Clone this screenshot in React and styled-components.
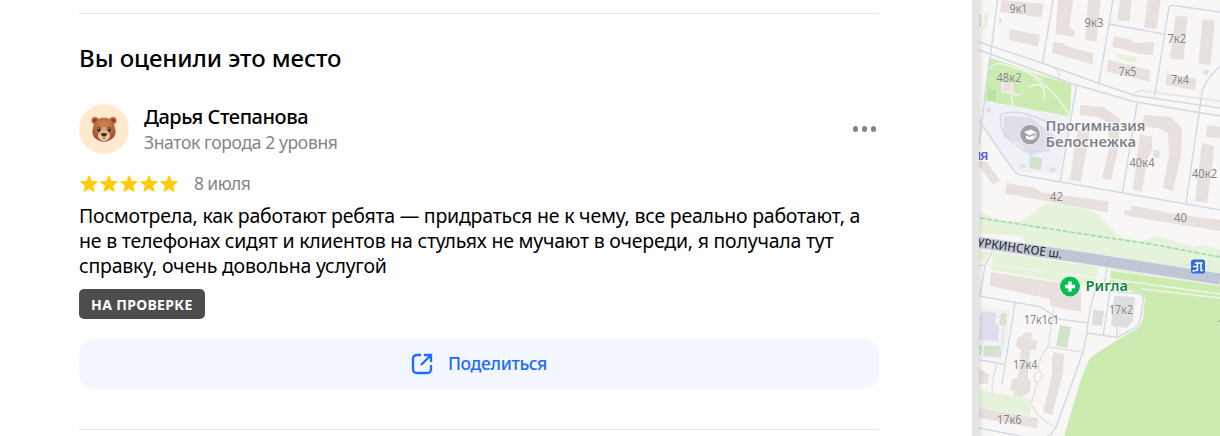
import React from "react";
import styled, { createGlobalStyle } from "styled-components";

const GlobalStyle = createGlobalStyle`
  * {
    box-sizing: border-box;
  }
  body {
    margin: 0;
    background: #fff;
    font-family: "Noto Sans", "Open Sans", sans-serif;
    color: #000;
  }
`;

const stars = [1, 2, 3, 4, 5];

const reviewLines = [
  "Посмотрела, как работают ребята — придраться не к чему, все реально работают, а",
  "не в телефонах сидят и клиентов на стульях не мучают в очереди, я получала тут",
  "справку, очень довольна услугой",
];

const buildings = [
  "1001.5,0 1043.5,4 1041.5,17.5 1000,12",
  "1010,29 1040,35 1037.5,46.5 1009,40",
  "1058,0 1073,0 1069.5,28 1075,31 1074,37 1055.5,34",
  "1088,0 1100.5,0 1096.5,41.5 1085,40",
  "1053.5,41.5 1065,44 1066,46 1093.5,53.5 1092.5,64.5 1052,52.5",
  "1120,0 1131.5,0 1129.5,21.5 1117.5,20",
  "1147.5,0 1160.5,0 1156.5,29 1144,27.5",
  "1114,36 1132,40 1132,43 1154,42 1153,55 1140,54 1123,49 1112,47",
  "1108.5,60 1150,70 1149,81.5 1106.5,71.5",
  "1175.5,16 1187.5,16.5 1183.5,60 1170,58.5",
  "1202.5,19.5 1215,20.5 1210.5,65 1198.5,63.5",
  "1166.5,73.5 1196,78.5 1195,90 1166,85",
  "1207,125 1220,127 1220,138 1206,137",
  "1080,105 1103,107 1120,119 1118,150 1111,180 1102,178 1109,150 1108,123 1098,117 1080,115",
  "1078,130 1090,130 1081,182 1070,180 1074,150",
  "1144,115 1171,117 1182,129 1181,155 1173,191 1163,188 1169,155 1168,133 1158,128 1142,127",
  "1140,134 1152,137 1152,150 1147,160 1142,192 1133,190",
  "1202,143 1214,146 1213,160 1207,203 1195,201",
  "979,160 987,162 1000,180.5 993,184.5 979,166",
  "1006.5,183 1035,188 1040,192 1108.5,201.5 1107.5,212.5 1005,193.5",
  "1131.5,205.5 1175,214 1220,220 1220,231 1130,216.5",
  "991,272 1060,283 1081,290 1081,312 1050,306 1050,299 990,286",
  "1020,337 1026,332 1032,333 1031,340 1037,340 1036,349 1030,350 1028,378 1031,381 1030,392 1022,397 1014,396 1014,391 1010,390 1012,380 1018,377 1021,350 1016,347 1017,338",
  "1054,352 1064,354 1063,373 1052,415 1043,412 1052,375 1052,358",
  "979,408 1038,418 1037,428 979,418",
  "979,369 989,374 988,384 979,384",
  "979,15 982,15 981,27 979,27",
];

const roads = [
  "M979 42L1042 63L1098 83L1135 95.5L1220 108",
  "M979 50L1070 83L1133 101.5L1220 116",
  "M997.5 0L979 145",
  "M1053 0L1042.5 63",
  "M1113 0L1099 83",
  "M1154.500 97L1169 7Q1170 5 1173 5.500L1220 12",
  "M1108 24L1163.500 34",
  "M1076.500 86L1060 182",
  "M1137 103L1122.500 193",
  "M1220 66Q1203 83 1202 93L1186 203",
  "M979 121L1012 168Q1015 174 1021 175L1220 210",
  "M979 296L1041 307L1058 319L1088 323",
  "M1015 303L1002 384",
  "M1097 286Q1089 306 1087 333L1083 352L1058 422Q1053 436 1045 437",
  "M1087 333L1117 337.500L1135 328Q1142 322 1143 298L1142 294L1110 291L1103 336",
  "M1117 337V326",
  "M979 360L1004 364",
  "M979 428L1025 437",
  "M979 265L985 266M993 250L985 266L980 295",
  "M1107 267L1104 286",
];

const footpaths = [
  "M1133 98Q1134 90 1143 91L1220 101",
  "M1054 308L1048 347L1082 352",
  "M1048 347Q1037 360 1039 370Q1030 378 1037 383Q1046 377 1039 370M1037 383L1031 404Q1041 422 1054 426",
  "M997 364Q990 385 993 397",
  "M1053 67Q1060 71 1059 78",
  "M995 316Q1003 316 1004 326L1002 345L996 356",
];

const parkPaths = [
  "M987 70Q998 60 1005 65L1071 83",
  "M1035 79Q1055 90 1069 115",
  "M1028 87Q1047 79 1044 99",
  "M1011 96L1013 106",
  "M1020 69L1042 80",
];

const houseLabels = [
  ["9к1", 1009.5, 13, 18],
  ["9к3", 1084.5, 26.500, 19],
  ["7к2", 1167.500, 43, 18.500],
  ["7к5", 1118.500, 75.500, 18],
  ["7к4", 1171, 84, 18],
  ["48к2", 996.500, 82, 25],
  ["40к4", 1129.500, 167, 25],
  ["40к2", 1192, 178, 25],
  ["42", 1050, 201, 13],
  ["40", 1174, 222, 13],
  ["17к2", 1109, 314, 24],
  ["17к1с1", 1024, 324, 35],
  ["17к4", 1013, 369, 24.500],
  ["17к6", 997, 424, 24.500],
];

const BearFace = () => (
  <svg width="26" height="26" viewBox="0 0 26 26">
    <defs>
      <radialGradient id="fur" cx="50%" cy="30%" r="70%">
        <stop offset="0" stopColor="#cb8656" />
        <stop offset="0.6" stopColor="#b8683c" />
        <stop offset="1" stopColor="#9a4a28" />
      </radialGradient>
      <linearGradient id="muzzle" x1="0" y1="0" x2="0" y2="1">
        <stop offset="0" stopColor="#d99d6c" />
        <stop offset="1" stopColor="#f3d8b6" />
      </linearGradient>
    </defs>
    <circle cx="4" cy="4.500" r="3.500" fill="#b3643a" />
    <circle cx="22" cy="4.500" r="3.500" fill="#b3643a" />
    <circle cx="4.300" cy="5" r="1.900" fill="#7d3d25" />
    <circle cx="21.700" cy="5" r="1.900" fill="#7d3d25" />
    <path d="M13 1.500C19 1.500 23 5 24 12C26.500 19 21 25.500 13 25.500S-0.500 19 2 12C3 5 7 1.500 13 1.500Z" fill="url(#fur)" />
    <path d="M13 10.500C15 10.500 15.500 14.500 18 16.500C20.500 20 18 24.800 13 24.800S5.500 20 8 16.500C10.500 14.500 11 10.500 13 10.500Z" fill="url(#muzzle)" />
    <ellipse cx="7.800" cy="13.500" rx="1.600" ry="2.200" fill="#2f2724" />
    <ellipse cx="18.200" cy="13.500" rx="1.600" ry="2.200" fill="#2f2724" />
    <circle cx="7.600" cy="12.700" r="0.600" fill="#d9dde0" />
    <circle cx="18" cy="12.700" r="0.600" fill="#d9dde0" />
    <path d="M9.800 17.800Q13 16.400 16.200 17.800Q15.500 20.600 13 20.800Q10.500 20.600 9.800 17.800Z" fill="#3b2823" />
    <path d="M10.500 22Q13 21.300 15.500 22Q13 24.200 10.500 22Z" fill="#b6574a" />
  </svg>
);

const Star = () => (
  <svg width="20" height="20" viewBox="0 0 20 20">
    <path
      d="M10 1.800L12.200 7.200L18.300 7.700L13.700 11.700L15.100 17.500L10 14.400L4.900 17.500L6.300 11.700L1.700 7.700L7.800 7.200Z"
      fill="#fc0"
      stroke="#fc0"
      strokeWidth="0.8"
      strokeLinejoin="round"
    />
  </svg>
);

const ShareIcon = () => (
  <svg width="22" height="22" viewBox="0 0 22 22" fill="none" stroke="#196dff" strokeWidth="2.3">
    <path d="M10 2H6Q2 2 2 6V16Q2 20 6 20H16Q20 20 20 16V12" />
    <path d="M13 2H20V9M19.500 2.500L10 12" />
  </svg>
);

const CityMap = () => (
  <MapCanvas viewBox="979 0 241 436">
    <defs>
      <linearGradient id="edge">
        <stop offset="0" stopColor="#000" stopOpacity="0.08" />
        <stop offset="1" stopColor="#000" stopOpacity="0" />
      </linearGradient>
    </defs>
    <rect x="979" width="241" height="436" fill="#f8f7f6" />

    {/* school grounds */}
    <path d="M983 101L1070 117L1059 174L1016 172L979 121Z" fill="#f0f0f7" />
    <path d="M1004 116L1030 117L1056 137L1048 150L1030 156L1020 144L1003 136Z" fill="#dfdfec" />
    <path d="M1001 114Q1020 109 1040 119L1056 125M1001 114Q997 132 1015 144L1025 151H1048L1055 138" fill="none" stroke="#d9dbe4" strokeWidth="1.5" />
    <path d="M1030 156L1042 158L1041 170L1029 168Z" fill="#d1e4cb" />
    <path d="M979 307L1010 311L1006 346L1001 360L979 357Z" fill="#f0f0f7" />
    <path d="M980 315L984 311L996 313L995 323L999 326L998 341L979 340Z" fill="#dfdcec" />
    <path d="M1001 313L1007 314L1006 326L999 325ZM979 345L982 345L981 355L979 355ZM984 346L1001 346L1001 357L983 356Z" fill="#d1e4cb" />

    {/* greenery */}
    <path d="M989 57.500L1071.500 84.500L1070 116.500L983.500 100.500Z" fill="#cbebb0" />
    <path d="M1117 54L1136 57L1138 61L1130 63L1118 58ZM985 11L989 13L986 30L982 29Z" fill="#e5f3da" />
    <path d="M979 212L1003 221L1021 221L1047 203L1066 205L1095 212L1119 236L1140 242L1157 236L1193 247L1205 245L1220 250V274L1080 254L1027 244L1021 236L979 233Z" fill="#e5f3da" />
    <path d="M993 252L1098 267L1096 288L1060 282L991 270Z" fill="#e5f3da" />
    <path d="M979 250L990 252L985 262L979 260ZM979 390L1031 399L1030 416L979 408ZM1123 262L1220 275V286L1108 271Z" fill="#e5f3da" />
    <path d="M1111 271L1220 286V436H1064L1082 376L1090 358L1117 340L1137 329L1143 319L1145 299L1142 294L1109 284Z" fill="#cbebb0" />
    <path d="M1109 279L1220 294M994 265L1107 279M1142 289L1220 298" stroke="#eef6e7" strokeWidth="1.500" />
    <path d="M1060 325L1071 327L1067 348L1056 346Z" fill="#d1e4cb" />
    <path d="M1001 82L1013 83L1014 93L1022 94L1022 85L1023 95L1015 96L1001 92Z" fill="#f1ece5" />
    <path d="M1003 82L1011 82V92L1003 91Z" fill="#e7e0dc" />
    <path d="M988 89L996 90V101L987 100Z" fill="#bce1a4" />

    {buildings.map((points) => (
      <polygon key={points} points={points} fill="#e7e0dc" />
    ))}
    <path d="M1114 296L1135 297L1133 320L1127 328L1111 326ZM1093 310L1104 311L1102 326L1092 325Z" fill="#dedede" />
    <path d="M999 18L1002 20L1001 23L999 23ZM1204 70L1209 71L1207 75L1203 74ZM987 107L991 108L990 113L986 112ZM1154 150L1160 151L1159 158L1153 157ZM1020 164L1026 165L1025 168L1020 167ZM1050 167L1056 169L1055 173L1049 171ZM1125 210L1131 211V216L1124 214Z" fill="#dfdfe1" />

    <g fill="none" strokeLinejoin="round">
      {parkPaths.map((d) => (
        <path key={d} d={d} stroke="#edf4df" strokeWidth="1.7" />
      ))}
      {footpaths.map((d) => (
        <path key={d} d={d} stroke="#e6e3df" strokeWidth="1.5" />
      ))}
      {roads.map((d) => (
        <path key={d} d={d} stroke="#d4dae5" strokeWidth="1.5" />
      ))}
      <path d="M980 218L1070 232L1150 244L1220 257" stroke="#a0d9ae" strokeWidth="1.6" strokeDasharray="5 2" />
      <path d="M1176 267Q1190 263 1212 267" stroke="#e5e5eb" strokeWidth="2" />
      <path d="M979 242.500L1085 258L1220 279" stroke="#e9edf2" strokeWidth="13" />
      <path d="M979 242.500L1085 258L1220 279" stroke="#bfc7d6" strokeWidth="11" />
    </g>

    {houseLabels.map(([label, x, y, length]) => (
      <HouseLabel key={label} x={x} y={y} textLength={length} lengthAdjust="spacingAndGlyphs">
        {label}
      </HouseLabel>
    ))}

    <StreetLabel transform="translate(976.500 246.500) rotate(8)" textLength="86" lengthAdjust="spacingAndGlyphs">
      УРКИНСКОЕ ш.
    </StreetLabel>
    <PlaceLabel x="980" y="160" $color="#6266d8" $size={14} textLength="8.500" lengthAdjust="spacingAndGlyphs">
      я
    </PlaceLabel>
    <path d="M979.500 152V160" stroke="#6266d8" strokeWidth="1.500" />

    <circle cx="1030" cy="134.500" r="10.500" fill="#f4f4f5" />
    <circle cx="1030" cy="134.500" r="9.800" fill="#9fa3a8" />
    <path d="M1024 132L1031 129.500L1036.500 132.500L1029.500 135.500ZM1026 135.500L1029.500 137L1034.500 135V138.500Q1031 141 1026 138.500Z" fill="#fff" />
    <path d="M1036 132.500V138" stroke="#fff" />
    <PlaceLabel x="1045.500" y="131" $color="#7e8288" $size={14.5} textLength="100" lengthAdjust="spacingAndGlyphs">
      Прогимназия
    </PlaceLabel>
    <PlaceLabel x="1045.500" y="147" $color="#7e8288" $size={14.5} textLength="90.500" lengthAdjust="spacingAndGlyphs">
      Белоснежка
    </PlaceLabel>

    <circle cx="1070" cy="286.500" r="10.500" fill="#fff" />
    <circle cx="1070" cy="286.500" r="10" fill="#0abb56" />
    <path d="M1070 281.500V291.500M1065 286.500H1075" stroke="#fff" strokeWidth="3.400" />
    <PlaceLabel x="1085.500" y="290.500" $color="#12843f" $size={15} textLength="42.500" lengthAdjust="spacingAndGlyphs">
      Ригла
    </PlaceLabel>

    <rect x="1191" y="259.500" width="14" height="14" rx="2.500" fill="#306ee0" />
    <path d="M1195 263H1202.500M1197.500 263V270.500M1201 263V270.500H1203M1193 266.500H1197.500M1194.500 270.500H1197.500" stroke="#fff" strokeWidth="1.500" fill="none" />
    <circle cx="1193.500" cy="271" r="1" fill="#fff" />

    <rect x="979" width="5" height="436" fill="url(#edge)" />
    <path d="M1218 322L1220 320" stroke="#8aa17c" />
  </MapCanvas>
);

const App = () => {
  return (
    <>
      <GlobalStyle />
      <Page>
        <Content>
          <Section>
            <Title>Вы оценили это место</Title>
            <Author>
              <Avatar>
                <BearFace />
              </Avatar>
              <AuthorInfo>
                <AuthorName>Дарья Степанова</AuthorName>
                <AuthorLevel>Знаток города 2 уровня</AuthorLevel>
              </AuthorInfo>
              <MenuButton aria-label="Ещё">
                <Dot />
                <Dot />
                <Dot />
              </MenuButton>
            </Author>
            <Rating>
              <Stars>
                {stars.map((star) => (
                  <Star key={star} />
                ))}
              </Stars>
              <ReviewDate>8 июля</ReviewDate>
            </Rating>
            <ReviewText>
              {reviewLines.map((line) => (
                <ReviewLine key={line}>{line}</ReviewLine>
              ))}
            </ReviewText>
            <Status>НА ПРОВЕРКЕ</Status>
            <ShareButton>
              <ShareIcon />
              <ShareText>Поделиться</ShareText>
            </ShareButton>
          </Section>
        </Content>
        <Scrollbar />
        <CityMap />
      </Page>
    </>
  );
};

const Page = styled.div`
  display: flex;
  width: 1220px;
  height: 436px;
  overflow: hidden;
`;

const Content = styled.main`
  width: 972px;
  padding: 13px 93px 0 79px;
`;

const Section = styled.section`
  display: flex;
  flex-direction: column;
  align-items: flex-start;
  height: 417px;
  border-top: 1px solid #e9e9e9;
  border-bottom: 1px solid #e9e9e9;
`;

const Title = styled.h2`
  margin: 29px 0 0;
  font-size: 24px;
  line-height: 30px;
  font-weight: 500;
  letter-spacing: -0.06px;
  white-space: nowrap;
`;

const Author = styled.div`
  display: flex;
  align-items: center;
  width: 100%;
  height: 50px;
  margin-top: 31px;
`;

const Avatar = styled.div`
  display: flex;
  align-items: center;
  justify-content: center;
  width: 50px;
  height: 50px;
  border-radius: 50%;
  background: #ffead0;
`;

const AuthorInfo = styled.div`
  flex: 1;
  margin-left: 15px;
  white-space: nowrap;
`;

const AuthorName = styled.div`
  font-size: 20px;
  line-height: 25px;
  font-weight: 500;
  letter-spacing: -0.44px;
`;

const AuthorLevel = styled.div`
  padding-top: 1px;
  font-size: 17.5px;
  line-height: 24px;
  letter-spacing: -0.36px;
  color: #858585;
`;

const MenuButton = styled.button`
  display: flex;
  gap: 3.5px;
  margin-right: 3px;
  padding: 0;
  border: none;
  background: none;
`;

const Dot = styled.span`
  width: 5.5px;
  height: 5.5px;
  border-radius: 50%;
  background: #858585;
`;

const Rating = styled.div`
  display: flex;
  align-items: center;
  height: 20px;
  margin-top: 19px;
`;

const Stars = styled.div`
  display: flex;
  padding-top: 1px;
`;

const ReviewDate = styled.span`
  margin-left: 15px;
  font-size: 17.5px;
  line-height: 20px;
  letter-spacing: -0.6px;
  color: #858585;
`;

const ReviewText = styled.div`
  margin-top: 10px;
`;

const ReviewLine = styled.div`
  height: 25px;
  font-size: 19.5px;
  line-height: 25px;
  letter-spacing: -0.22px;
  white-space: nowrap;
`;

const Status = styled.div`
  height: 30px;
  margin-top: 11px;
  padding: 0 12px;
  border-radius: 5px;
  background: #4d4d4d;
  color: #fff;
  font-size: 14px;
  line-height: 32px;
  font-weight: 700;
  letter-spacing: 0.35px;
  white-space: nowrap;
`;

const ShareButton = styled.button`
  display: flex;
  align-items: center;
  justify-content: center;
  gap: 15px;
  width: 100%;
  height: 50px;
  margin-top: 20px;
  padding: 0;
  border: none;
  border-radius: 15px;
  background: #f3f6fe;
  color: #196dff;
`;

const ShareText = styled.span`
  padding-bottom: 2px;
  font-family: "Noto Sans", sans-serif;
  font-size: 17.5px;
  font-weight: 500;
  letter-spacing: -0.35px;
`;

const Scrollbar = styled.div`
  width: 7px;
  height: 436px;
  background: #e4e4e4;
`;

const MapCanvas = styled.svg`
  display: block;
  width: 241px;
  height: 436px;
`;

const HouseLabel = styled.text`
  font-family: "Noto Sans", sans-serif;
  font-size: 11.8px;
  fill: #858585;
  stroke: #f8f7f6;
  stroke-width: 1px;
  stroke-opacity: 0.5;
  paint-order: stroke;
`;

const StreetLabel = styled.text`
  font-family: "Noto Sans", sans-serif;
  font-size: 12.5px;
  font-weight: 500;
  fill: #2d3036;
  stroke: #fff;
  stroke-width: 1px;
  stroke-opacity: 0.4;
  paint-order: stroke;
`;

const PlaceLabel = styled.text`
  font-family: "Noto Sans", sans-serif;
  font-size: ${({ $size }) => $size}px;
  font-weight: 600;
  fill: ${({ $color }) => $color};
  stroke: #fff;
  stroke-width: 2px;
  stroke-opacity: 0.8;
  paint-order: stroke;
`;

export default App;
